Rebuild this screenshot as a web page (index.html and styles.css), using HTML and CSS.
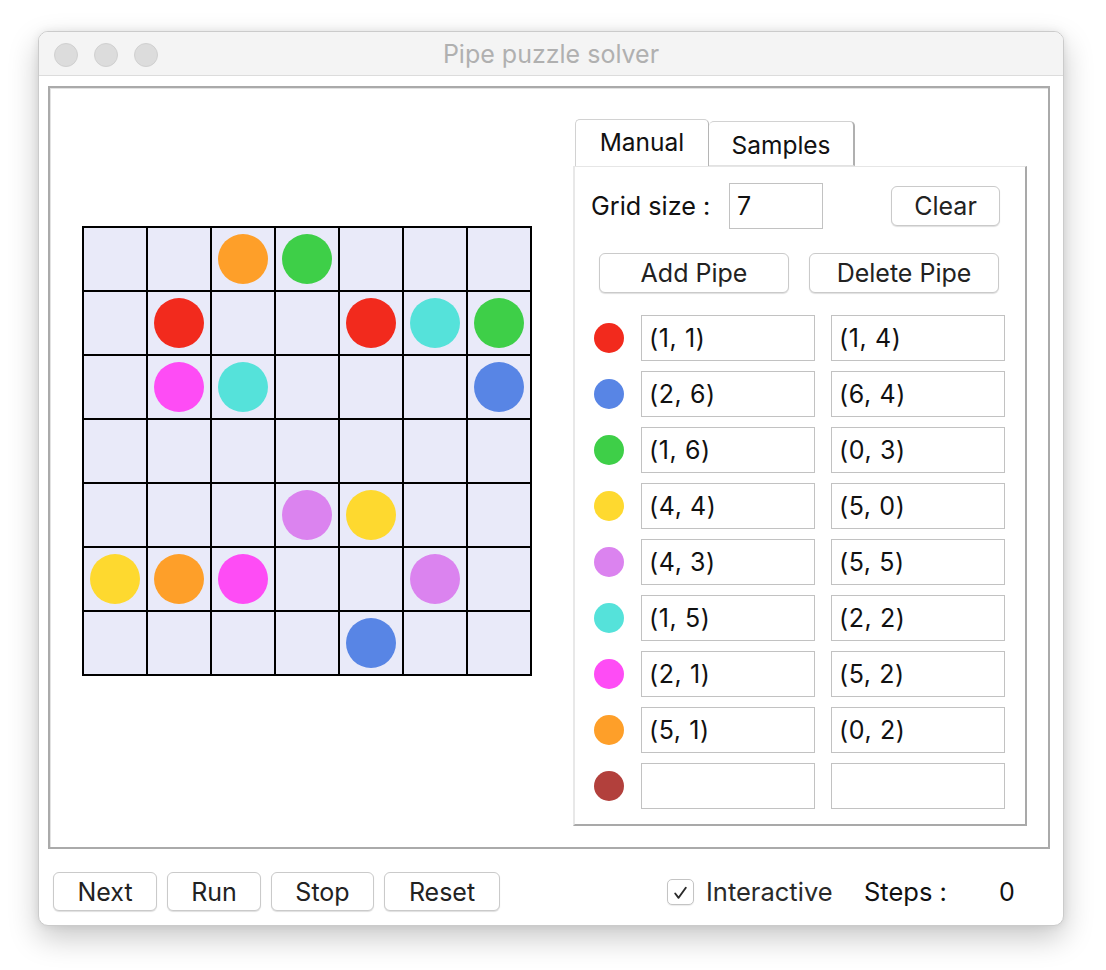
FILE: index.html
```html
<!DOCTYPE html>
<html>
<head>
<meta charset="utf-8">
<title>Pipe puzzle solver</title>
<link rel="stylesheet" href="styles.css">
</head>
<body>
<div class="window">
  <div class="titlebar">
    <div class="lights"><span class="light"></span><span class="light"></span><span class="light"></span></div>
    <div class="title">Pipe puzzle solver</div>
  </div>
  <div class="panel">
    <div class="board">
      <div class="cell"></div><div class="cell"></div><div class="cell"><span class="dot orange"></span></div><div class="cell"><span class="dot green"></span></div><div class="cell"></div><div class="cell"></div><div class="cell"></div>
      <div class="cell"></div><div class="cell"><span class="dot red"></span></div><div class="cell"></div><div class="cell"></div><div class="cell"><span class="dot red"></span></div><div class="cell"><span class="dot cyan"></span></div><div class="cell"><span class="dot green"></span></div>
      <div class="cell"></div><div class="cell"><span class="dot magenta"></span></div><div class="cell"><span class="dot cyan"></span></div><div class="cell"></div><div class="cell"></div><div class="cell"></div><div class="cell"><span class="dot blue"></span></div>
      <div class="cell"></div><div class="cell"></div><div class="cell"></div><div class="cell"></div><div class="cell"></div><div class="cell"></div><div class="cell"></div>
      <div class="cell"></div><div class="cell"></div><div class="cell"></div><div class="cell"><span class="dot violet"></span></div><div class="cell"><span class="dot yellow"></span></div><div class="cell"></div><div class="cell"></div>
      <div class="cell"><span class="dot yellow"></span></div><div class="cell"><span class="dot orange"></span></div><div class="cell"><span class="dot magenta"></span></div><div class="cell"></div><div class="cell"></div><div class="cell"><span class="dot violet"></span></div><div class="cell"></div>
      <div class="cell"></div><div class="cell"></div><div class="cell"></div><div class="cell"></div><div class="cell"><span class="dot blue"></span></div><div class="cell"></div><div class="cell"></div>
    </div>
    <div class="tabpane">
      <div class="tabs">
        <div class="tab active">Manual</div>
        <div class="tab">Samples</div>
      </div>
      <div class="tabcontent">
        <div class="size-row">
          <span class="size-label">Grid size :</span>
          <div class="field size-field">7</div>
          <button class="btn clear-btn">Clear</button>
        </div>
        <div class="action-row">
          <button class="btn wide-btn">Add Pipe</button>
          <button class="btn wide-btn">Delete Pipe</button>
        </div>
        <div class="pipes">
          <div class="pipe"><span class="pdot red"></span><div class="field">(1, 1)</div><div class="field">(1, 4)</div></div>
          <div class="pipe"><span class="pdot blue"></span><div class="field">(2, 6)</div><div class="field">(6, 4)</div></div>
          <div class="pipe"><span class="pdot green"></span><div class="field">(1, 6)</div><div class="field">(0, 3)</div></div>
          <div class="pipe"><span class="pdot yellow"></span><div class="field">(4, 4)</div><div class="field">(5, 0)</div></div>
          <div class="pipe"><span class="pdot violet"></span><div class="field">(4, 3)</div><div class="field">(5, 5)</div></div>
          <div class="pipe"><span class="pdot cyan"></span><div class="field">(1, 5)</div><div class="field">(2, 2)</div></div>
          <div class="pipe"><span class="pdot magenta"></span><div class="field">(2, 1)</div><div class="field">(5, 2)</div></div>
          <div class="pipe"><span class="pdot orange"></span><div class="field">(5, 1)</div><div class="field">(0, 2)</div></div>
          <div class="pipe"><span class="pdot darkred"></span><div class="field"></div><div class="field"></div></div>
        </div>
      </div>
    </div>
  </div>
  <div class="bottombar">
    <button class="btn bb next">Next</button>
    <button class="btn bb run">Run</button>
    <button class="btn bb stop">Stop</button>
    <button class="btn bb reset">Reset</button>
    <span class="checkbox"><svg width="26" height="26" viewBox="0 0 26 26"><path d="M7.5 13.5 L11 18 L18.5 7.5" fill="none" stroke="#2b2b2b" stroke-width="2" stroke-linecap="round" stroke-linejoin="round"/></svg></span>
    <span class="interactive">Interactive</span>
    <span class="steps">Steps :</span>
    <span class="steps-val">0</span>
  </div>
</div>
</body>
</html>
```
FILE: styles.css
```css
* { box-sizing: border-box; }
html, body { margin: 0; padding: 0; background: #ffffff; }
body {
  font-family: Inter, "Noto Sans", "Liberation Sans", sans-serif;
  color: #111;
  width: 1106px;
  height: 970px;
  overflow: hidden;
  padding-top: 31px;
  padding-left: 38px;
}
.window {
  width: 1026px;
  height: 895px;
  background: #fff;
  border: 1px solid #cbcbcb;
  border-radius: 10px;
  box-shadow: 0 12px 30px rgba(0,0,0,0.22), 0 0 8px rgba(0,0,0,0.08);
  overflow: hidden;
}
.titlebar {
  position: relative;
  height: 44px;
  background: #f4f4f4;
  border-bottom: 1px solid #dcdcdc;
  display: flex;
  align-items: center;
  justify-content: center;
}
.lights {
  position: absolute;
  left: 15px;
  top: 11px;
  display: flex;
  gap: 16px;
}
.light {
  width: 24px;
  height: 24px;
  border-radius: 50%;
  background: #dcdcdc;
  border: 1px solid #d0d0d0;
}
.title {
  font-size: 25px;
  color: #b0b0b0;
}
.panel {
  margin: 10px 0 0 9px;
  width: 1002px;
  height: 763px;
  border: 2px solid #aaaaaa;
  box-shadow: inset 1px 1px 0 #e2e2e2;
  display: flex;
  align-items: flex-start;
}
.board {
  margin: 138px 0 0 32px;
  width: 450px;
  height: 450px;
  padding: 2px;
  background: #000;
  display: grid;
  grid-template-columns: repeat(7, 62px);
  grid-template-rows: repeat(7, 62px);
  gap: 2px;
}
.cell {
  background: #e9eaf9;
  display: flex;
  align-items: center;
  justify-content: center;
}
.dot {
  width: 50px;
  height: 50px;
  border-radius: 50%;
}
.red { background: #f22a1d; }
.blue { background: #5885e5; }
.green { background: #3ecf48; }
.yellow { background: #fed92f; }
.violet { background: #db83ef; }
.cyan { background: #55e2da; }
.magenta { background: #fe4cf5; }
.orange { background: #fe9f29; }
.darkred { background: #b2403c; }

.tabpane {
  margin: 31px 21px 0 auto;
  width: 454px;
}
.tabs {
  display: flex;
  align-items: flex-end;
  height: 47px;
  padding-left: 2px;
}
.tab {
  font-size: 24.5px;
  color: #111;
  background: #fff;
  border: 1px solid #d2d2d2;
  border-bottom: none;
  border-radius: 5px 5px 0 0;
  display: flex;
  align-items: center;
  justify-content: center;
}
.tab.active {
  width: 134px;
  height: 47px;
  border-right-color: #b5b5b5;
  padding-bottom: 2px;
}
.tab:not(.active) {
  width: 146px;
  height: 45px;
  border-left: none;
  border-right: 2px solid #b0b0b0;
  border-bottom: 1px solid #e2e2e2;
  padding-top: 2px;
}
.tabcontent {
  height: 660px;
  border-left: 2px solid #e8e8e8;
  border-top: 1px solid #e6e6e6;
  border-right: 2px solid #a9a9a9;
  border-bottom: 2px solid #a9a9a9;
  padding: 16px 0 0 16px;
}
.size-row {
  display: flex;
  align-items: center;
  height: 46px;
}
.size-label {
  width: 138px;
  font-size: 25.2px;
  color: #111;
}
.field {
  height: 46px;
  border: 1px solid #c2c2c2;
  background: #fff;
  font-size: 25px;
  color: #111;
  display: flex;
  align-items: center;
  padding-left: 7px;
  letter-spacing: 0.6px;
}
.size-field { width: 94px; }
.btn {
  font-family: inherit;
  font-size: 25px;
  color: #222;
  background: #fff;
  border: 1px solid #cacaca;
  border-radius: 6px;
  box-shadow: 0 1px 1px rgba(0,0,0,0.13);
  padding: 0;
  height: 40px;
}
.clear-btn {
  width: 109px;
  margin-left: 68px;
}
.action-row {
  display: flex;
  gap: 20px;
  margin: 24px 0 0 8px;
}
.wide-btn { width: 190px; }
.pipes {
  margin-top: 22px;
  display: flex;
  flex-direction: column;
  gap: 10px;
}
.pipe {
  display: flex;
  align-items: center;
}
.pdot {
  width: 30px;
  height: 30px;
  border-radius: 50%;
  margin: 0 17px 0 3px;
}
.pipe .field {
  width: 174px;
}
.pipe .field + .field {
  margin-left: 16px;
}
.bottombar {
  display: flex;
  align-items: center;
  margin-top: 23px;
  padding-left: 14px;
}
.bb { height: 39px; margin-right: 10px; }
.next { width: 104px; }
.run { width: 94px; }
.stop { width: 103px; }
.reset { width: 116px; }
.checkbox {
  margin-left: 157px;
  width: 27px;
  height: 26px;
  border: 1px solid #c4c4c4;
  border-radius: 5px;
  background: #fff;
  box-shadow: 0 1px 1px rgba(0,0,0,0.08);
  display: flex;
}
.interactive {
  margin-left: 12px;
  width: 158px;
  font-size: 25.5px;
  color: #2a2a2a;
}
.steps {
  width: 135px;
  font-size: 25.5px;
  color: #111;
}
.steps-val {
  font-size: 25px;
  color: #111;
}
```
